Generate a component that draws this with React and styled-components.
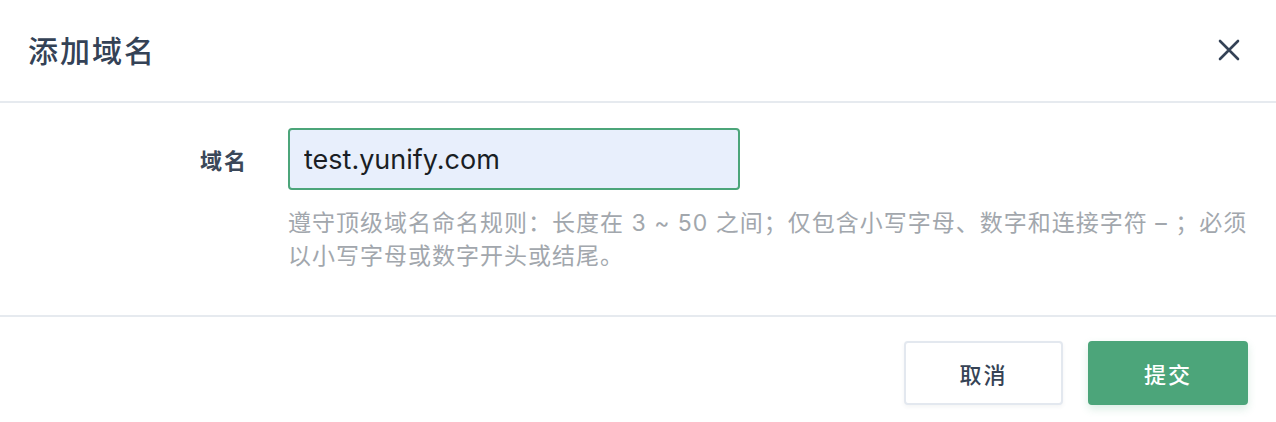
import styled, { createGlobalStyle } from "styled-components";

const GlobalStyle = createGlobalStyle`
  html, body {
    margin: 0;
    padding: 0;
    background: #ffffff;
  }
  body {
    font-family: "Noto Sans CJK SC", "Noto Sans", sans-serif;
  }
  * {
    box-sizing: border-box;
  }
`;

const Dialog = styled.div`
  width: 1276px;
  height: 422px;
  background: #ffffff;
  display: flex;
  flex-direction: column;
`;

const Header = styled.div`
  height: 103px;
  padding: 0 34px 0 28px;
  display: flex;
  align-items: center;
  justify-content: space-between;
  border-bottom: 2px solid #e6eaef;
`;

const Title = styled.h2`
  margin: 0;
  font-size: 30px;
  letter-spacing: 2px;
  font-weight: 500;
  color: #344256;
  line-height: 1;
  padding-bottom: 4px;
`;

const CloseButton = styled.button`
  border: none;
  background: transparent;
  padding: 0;
  width: 26px;
  height: 26px;
  display: flex;
  align-items: center;
  justify-content: center;
  cursor: pointer;
  margin-bottom: 2px;
`;

const Body = styled.div`
  padding: 25px 28px 42px 0;
  border-bottom: 2px solid #e6eaef;
`;

const Row = styled.div`
  display: flex;
  align-items: flex-start;
  gap: 40px;
`;

const Label = styled.label`
  width: 248px;
  flex-shrink: 0;
  text-align: right;
  font-size: 22px;
  letter-spacing: 2px;
  font-weight: 600;
  color: #3b4859;
  line-height: 62px;
`;

const Field = styled.div`
  flex: 1;
  display: flex;
  flex-direction: column;
`;

const Input = styled.input`
  width: 452px;
  height: 62px;
  border: 2px solid #4ca57a;
  border-radius: 4px;
  background: #e8effc;
  padding: 0 14px;
  font-family: "Inter", "Noto Sans CJK SC", sans-serif;
  font-size: 27px;
  color: #1a1e24;
  outline: none;
`;

const Hint = styled.p`
  margin: 17px 0 0;
  font-family: "Inter", "Noto Sans CJK SC", sans-serif;
  font-size: 23px;
  letter-spacing: 1px;
  line-height: 33px;
  color: #a2a7ad;
  font-weight: 400;
`;

const Footer = styled.div`
  flex: 1;
  display: flex;
  justify-content: flex-end;
  align-items: flex-start;
  gap: 25px;
  padding: 24px 28px 0 0;
`;

const Button = styled.button`
  width: ${(p) => (p.$primary ? "160px" : "159px")};
  height: 64px;
  border-radius: 4px;
  font-family: "Noto Sans CJK SC", sans-serif;
  font-size: 22px;
  letter-spacing: 2px;
  font-weight: 500;
  cursor: pointer;
  border: 2px solid ${(p) => (p.$primary ? "#4ca57a" : "#e3e8ef")};
  background: ${(p) => (p.$primary ? "#4ca57a" : "#ffffff")};
  color: ${(p) => (p.$primary ? "#ffffff" : "#364355")};
  box-shadow: ${(p) =>
    p.$primary ? "0 4px 8px rgba(76, 165, 122, 0.2)" : "0 2px 4px rgba(52, 66, 86, 0.06)"};
`;

const App = () => {
  return (
    <>
      <GlobalStyle />
      <Dialog>
        <Header>
          <Title>添加域名</Title>
          <CloseButton aria-label="close">
            <svg width="22" height="22" viewBox="0 0 22 22">
              <path
                d="M2 2 L20 20 M20 2 L2 20"
                stroke="#344256"
                strokeWidth="2.6"
                strokeLinecap="round"
              />
            </svg>
          </CloseButton>
        </Header>
        <Body>
          <Row>
            <Label>域名</Label>
            <Field>
              <Input defaultValue="test.yunify.com" />
              <Hint>
                遵守顶级域名命名规则：长度在 3 ~ 50 之间；仅包含小写字母、数字和连接字符 – ；必须以小写字母或数字开头或结尾。
              </Hint>
            </Field>
          </Row>
        </Body>
        <Footer>
          <Button>取消</Button>
          <Button $primary>提交</Button>
        </Footer>
      </Dialog>
    </>
  );
};

export default App;
